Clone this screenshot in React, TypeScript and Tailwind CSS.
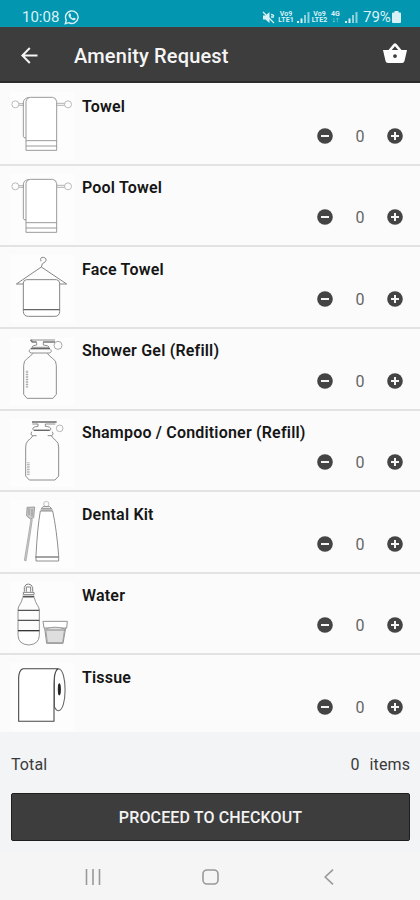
import type { ReactNode } from "react";

const Towel = () => (
  <svg viewBox="30 25 192 204" className="h-[68px] w-[64px]" fill="none" stroke="#8a8a8a" strokeWidth="2.6">
    <circle cx="46" cy="62" r="10.5" stroke="#b0b0b0" />
    <circle cx="204" cy="62" r="10.5" stroke="#b0b0b0" />
    <path d="M57 60H72M57 65H72M171 59H194M171 65H194" stroke="#a8a8a8" />
    <path d="M88 41C76 43 70 48 70 58V158Q70 163 78 163" />
    <path d="M78 200V53Q80 41 91 41H158Q169 43 170 54V200Z" fill="#fff" />
    <path d="M78 171H170M78 187H170" />
  </svg>
);

const FaceTowel = () => (
  <svg viewBox="30 29 192 204" className="h-[68px] w-[64px]" fill="none" stroke="#858585" strokeWidth="3">
    <path d="M123 48Q119 35 130 36Q143 39 136 49Q124 54 124 65L49 116H70M124 65L200 116H179" />
    <path d="M70 199V113Q71 103 80 103H169Q178 104 179 113V199Q178 213 164 213H85Q71 213 70 199Z" fill="#fff" />
    <path d="M70 193H179" strokeWidth="4" stroke="#666" />
  </svg>
);

const ShowerGel = () => (
  <svg viewBox="30 274 192 204" className="h-[68px] w-[64px]" fill="none" stroke="#858585" strokeWidth="2.8">
    <path d="M92 282L97 289H110M129 289H165" strokeWidth="5" stroke="#777" />
    <path d="M92 283H165M110 290V298Q97 299 95 305H148Q146 299 130 298V290" />
    <path d="M92 309H150" strokeWidth="4" stroke="#666" />
    <path d="M90 311Q84 320 94 322H148Q157 320 152 311" />
    <circle cx="174" cy="299" r="12" stroke="#a0a0a0" />
    <path d="M99 323Q92 332 82 338Q71 345 71 359V446L81 458H159L169 446V359Q169 345 158 338Q148 332 142 323" />
    <path d="M81 375V426" stroke="#aaa" strokeWidth="7" strokeDasharray="3 2" />
  </svg>
);

const Shampoo = () => (
  <svg viewBox="30 26 192 204" className="h-[68px] w-[64px]" fill="none" stroke="#858585" strokeWidth="2.8">
    <path d="M96 35H170" strokeWidth="5" stroke="#777" />
    <path d="M97 41H114V48Q98 49 98 57L102 60H149L153 57Q153 49 136 48V41H166" />
    <path d="M102 60H149" strokeWidth="4" stroke="#666" />
    <path d="M95 64Q90 72 96 76H110M143 76H156Q162 71 157 64" />
    <circle cx="179" cy="54" r="10" stroke="#b0b0b0" />
    <path d="M98 77Q93 85 84 91Q77 97 77 110V197L88 209H165L176 197V110Q176 97 168 91Q159 85 155 77" />
    <path d="M85 156V195" stroke="#b5b5b5" strokeWidth="8" strokeDasharray="3 2" />
  </svg>
);

const DentalKit = () => (
  <svg viewBox="30 271 192 204" className="h-[68px] w-[64px]" fill="none" stroke="#858585" strokeWidth="2.8">
    <path d="M81 293L104 292L101 324L91 328L80 319Z" fill="#c9c9c9" stroke="#999" />
    <path d="M87 296V316M96 298V320" stroke="#777" strokeWidth="2" />
    <path d="M93 328L86 372L73 452L78 454L89 384L97 329" fill="#ccc" stroke="#999" strokeWidth="2" />
    <circle cx="139" cy="283" r="8" stroke="#bbb" />
    <path d="M129 291H149L155 297H124ZM122 301H158" stroke="#888" />
    <path d="M121 304Q112 356 108 438V454H176V438Q170 360 158 304Z" fill="#fff" />
    <path d="M106 442H176" stroke="#777" strokeWidth="4" />
  </svg>
);

const Water = () => (
  <svg viewBox="30 24 192 204" className="h-[68px] w-[64px]" fill="none" stroke="#8a8a8a" strokeWidth="2.8">
    <path d="M73 53V40Q76 30 85 30Q95 31 98 40V53M79 53V39H92V53M70 55H102V62H70Z" stroke="#777" />
    <path d="M68 68H103" strokeWidth="5" stroke="#555" />
    <path d="M68 71Q66 83 57 96Q54 101 54 110V184Q55 211 86 213Q117 211 118 184V110Q118 101 113 95Q105 83 103 71" />
    <path d="M54 109H118M54 139H118" stroke="#555" strokeWidth="3.5" />
    <path d="M54 170H118" stroke="#333" strokeWidth="4" />
    <path d="M129 142H202L200 162H132Z" fill="#fff" />
    <path d="M134 162L140 208H189L197 162" />
    <path d="M137 165Q165 154 194 165L188 206H142Z" fill="#dedede" stroke="#999" />
    <path d="M139 168H193" stroke="#888" />
  </svg>
);

const Tissue = () => (
  <svg viewBox="30 269 192 204" className="h-[68px] w-[64px]" fill="#fff" stroke="#444" strokeWidth="3.2">
    <path d="M175 286C202 286 202 412 175 412Q169 412 163 400V330Q163 286 175 286Z" stroke="#666" />
    <path d="M56 444V312Q57 290 69 286H175Q162 291 162 330V444Z" />
    <ellipse cx="178" cy="348" rx="3" ry="17" fill="#222" stroke="#222" />
  </svg>
);

const items: { name: string; icon: ReactNode }[] = [
  { name: "Towel", icon: <Towel /> },
  { name: "Pool Towel", icon: <Towel /> },
  { name: "Face Towel", icon: <FaceTowel /> },
  { name: "Shower Gel (Refill)", icon: <ShowerGel /> },
  { name: "Shampoo / Conditioner (Refill)", icon: <Shampoo /> },
  { name: "Dental Kit", icon: <DentalKit /> },
  { name: "Water", icon: <Water /> },
  { name: "Tissue", icon: <Tissue /> },
];

function Signal() {
  return (
    <svg viewBox="0 0 13 12" className="h-3 w-[13px]" fill="currentColor">
      <path d="M0 10h2v2H0zM3.5 7.5h2V12h-2z" />
      <path d="M7 4h2v8H7zM10.5 1h2v11h-2z" opacity=".65" />
    </svg>
  );
}

function NetLabel({ top, bottom }: { top: string; bottom: string }) {
  return (
    <span className="flex flex-col items-center text-[7px] leading-[6.5px] font-bold">
      <span>{top}</span>
      <span>{bottom}</span>
    </span>
  );
}

function StatusBar() {
  return (
    <div className="flex h-[27px] shrink-0 items-center bg-[#0296b1] pt-[7px] pr-[19px] pl-[22px] text-[#d9f1f5]">
      <span className="w-[38px] text-[15px] leading-5">10:08</span>
      <svg viewBox="0 0 16 16" className="ml-1 h-4 w-4" fill="none" stroke="currentColor" strokeWidth="1.4">
        <path d="M1.3 14.7l1-3.5a6.3 6.3 0 1 1 2.5 2.5z" />
        <path d="M5.3 4.5l1-.2.9 2-.7.9q.8 1.5 2.4 2.2l.9-.8 1.9.9-.2 1.1q-1.1 1.2-3.1.3-2.9-1.3-3.9-4-.2-1.4.8-2.4z" fill="currentColor" stroke="none" />
      </svg>
      <div className="ml-auto flex items-center">
        <svg viewBox="0 0 13 13" className="h-[13px] w-[13px]" fill="currentColor">
          <path d="M1 4.5h2.5L7.5 1v11L3.5 8.5H1z" />
          <path d="M1 1l11 11M9 3.5q2 0 3 1.5M9 6h3" stroke="currentColor" strokeWidth="1.3" fill="none" />
        </svg>
        <div className="ml-[3px] w-[16px]"><NetLabel top="Vo9" bottom="LTE1" /></div>
        <div className="ml-[3px]"><Signal /></div>
        <div className="ml-[1px] w-[17px]"><NetLabel top="Vo9" bottom="LTE2" /></div>
        <div className="ml-[2px] w-[11px]"><NetLabel top="4G" bottom="↓↑" /></div>
        <div className="ml-1"><Signal /></div>
        <span className="ml-[5px] w-[29px] text-[15px] leading-5">79%</span>
        <svg viewBox="0 0 9 12" className="h-3 w-[9px]" fill="currentColor">
          <path d="M2.5 0h4v1.5H8q1 0 1 1V11q0 1-1 1H1q-1 0-1-1V2.5q0-1 1-1h1.5z" />
        </svg>
      </div>
    </div>
  );
}

function Header() {
  return (
    <header className="flex h-14 shrink-0 items-center border-b-2 border-[#2c2c2c] bg-[#3d3d3d] pt-0.5 pr-[13px] pl-[21px] text-[#f5f5f5] shadow-[0_1px_2px_#aaa]">
      <svg viewBox="0 0 17 17" className="h-[17px] w-[17px]" fill="none" stroke="currentColor" strokeWidth="2">
        <path d="M16.5 8.5H1.5M8.8 1L1.3 8.5L8.8 16" />
      </svg>
      <h1 className="mt-0.5 ml-9 text-[20px] leading-6 font-medium tracking-[0.15px]">Amenity Request</h1>
      <svg viewBox="0 0 24 20" className="mb-1 ml-auto h-5 w-6" fill="#fff">
        <path d="M0 7H5.5L10.5 1Q12 -.5 13.5 1L18.5 7H24L21.5 18Q21 20 19 20H5Q3 20 2.5 18ZM8.8 7H15.2L12 3.2ZM12 11.2a1.9 1.9 0 1 0 0 3.8 1.9 1.9 0 0 0 0-3.8Z" fillRule="evenodd" />
      </svg>
    </header>
  );
}

function RoundButton({ plus = false }: { plus?: boolean }) {
  return (
    <button className="h-4 w-4" aria-label={plus ? "Add" : "Remove"}>
      <svg viewBox="0 0 16 16" className="h-4 w-4">
        <circle cx="8" cy="8" r="7.8" fill="#444" />
        <path d={plus ? "M4 8H12M8 4V12" : "M4 8H12"} stroke="#f5f5f5" strokeWidth="2" />
      </svg>
    </button>
  );
}

export default function App() {
  return (
    <div className="flex h-[900px] w-[420px] flex-col overflow-hidden bg-[#f4f5f6] font-[Roboto,sans-serif]">
      <StatusBar />
      <Header />

      <main className="h-[649px] shrink-0 overflow-hidden bg-[#fbfbfb] pt-[1.2px]">
        {items.map((item) => (
          <div key={item.name} className="flex h-[81.6px] border-b-2 border-[#e3e3e3] pt-2 pl-[10px]">
            <div className="h-[68px] w-16 shrink-0 bg-[#fdfdfd]">{item.icon}</div>
            <div className="ml-2 flex flex-1 flex-col pr-[17px]">
              <h2 className="mt-[4.4px] text-[16px] leading-5 font-semibold tracking-[0.19px] whitespace-nowrap text-[#161616]">{item.name}</h2>
              <div className="mt-[9.2px] flex items-center justify-end">
                <RoundButton />
                <span className="mt-px -mb-px w-[54px] text-center text-[16px] leading-5 text-[#666]">0</span>
                <RoundButton plus />
              </div>
            </div>
          </div>
        ))}
      </main>

      <footer className="flex flex-1 flex-col bg-[#f3f4f6] px-[11px] pt-[23px]">
        <div className="-mr-px flex justify-between text-[16px] leading-5 tracking-[0.1px] text-[#3a3a3a]">
          <span>Total</span>
          <span className="flex gap-[10px]"><span>0</span><span>items</span></span>
        </div>
        <button className="mt-[18px] -mr-px h-12 rounded-[2px] border border-[#1f1f1f] bg-[#3d3d3d] pt-0.5 text-[16px] font-medium tracking-[0.13px] text-[#f3f3f3]">
          PROCEED TO CHECKOUT
        </button>
      </footer>

      <nav className="flex h-[47px] shrink-0 items-center bg-[#f5f5f5] pl-[85px] text-[#999]">
        <svg viewBox="0 0 16 16" className="h-4 w-4" stroke="currentColor" strokeWidth="1.6">
          <path d="M1.5 0V16M8 0V16M14.5 0V16" />
        </svg>
        <svg viewBox="0 0 17 16" className="ml-[101px] h-4 w-[17px]" fill="none" stroke="currentColor" strokeWidth="1.6">
          <rect x="1" y="1" width="15" height="14" rx="4" />
        </svg>
        <svg viewBox="0 0 10 16" className="ml-[105px] h-4 w-[10px]" fill="none" stroke="currentColor" strokeWidth="1.6">
          <path d="M9 .7L1.2 8L9 15.3" />
        </svg>
      </nav>
    </div>
  );
}
